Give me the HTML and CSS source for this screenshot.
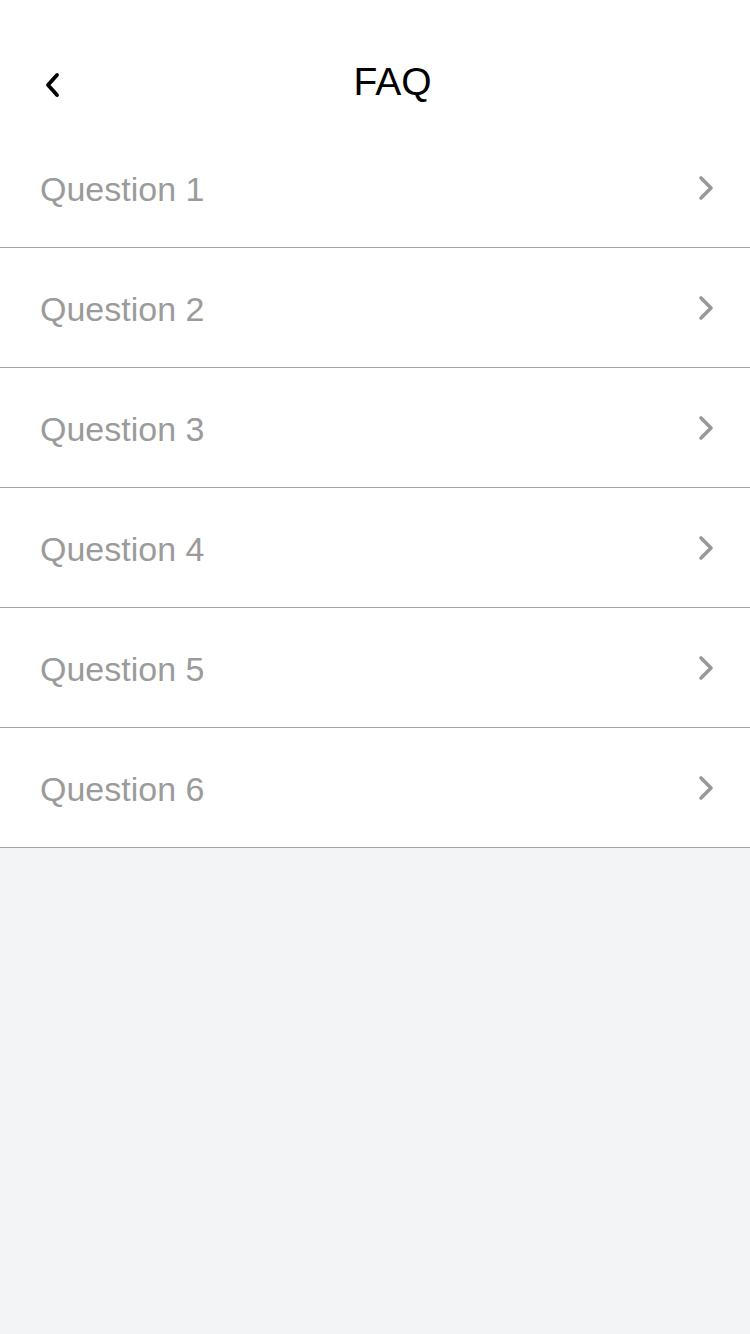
FILE: index.html
```html
<!DOCTYPE html>
<html lang="en">
<head>
<meta charset="utf-8">
<title>FAQ</title>
<link rel="stylesheet" href="styles.css">
</head>
<body>
<div class="page">
  <header class="header">
    <button class="back" aria-label="Back">
      <svg width="20" height="28" viewBox="0 0 20 28"><polyline points="14,4 5,14 14,24" fill="none" stroke="#000" stroke-width="3.8" stroke-linecap="round" stroke-linejoin="round"/></svg>
    </button>
    <h1 class="title">FAQ</h1>
    <span></span>
  </header>
  <ul class="list">
    <li class="row"><span class="q">Question 1</span><svg class="chev" width="18" height="26" viewBox="0 0 18 26"><polyline points="4,3 14,13 4,23" fill="none" stroke="#999" stroke-width="3.6" stroke-linecap="round" stroke-linejoin="round"/></svg></li>
    <li class="row"><span class="q">Question 2</span><svg class="chev" width="18" height="26" viewBox="0 0 18 26"><polyline points="4,3 14,13 4,23" fill="none" stroke="#999" stroke-width="3.6" stroke-linecap="round" stroke-linejoin="round"/></svg></li>
    <li class="row"><span class="q">Question 3</span><svg class="chev" width="18" height="26" viewBox="0 0 18 26"><polyline points="4,3 14,13 4,23" fill="none" stroke="#999" stroke-width="3.6" stroke-linecap="round" stroke-linejoin="round"/></svg></li>
    <li class="row"><span class="q">Question 4</span><svg class="chev" width="18" height="26" viewBox="0 0 18 26"><polyline points="4,3 14,13 4,23" fill="none" stroke="#999" stroke-width="3.6" stroke-linecap="round" stroke-linejoin="round"/></svg></li>
    <li class="row"><span class="q">Question 5</span><svg class="chev" width="18" height="26" viewBox="0 0 18 26"><polyline points="4,3 14,13 4,23" fill="none" stroke="#999" stroke-width="3.6" stroke-linecap="round" stroke-linejoin="round"/></svg></li>
    <li class="row"><span class="q">Question 6</span><svg class="chev" width="18" height="26" viewBox="0 0 18 26"><polyline points="4,3 14,13 4,23" fill="none" stroke="#999" stroke-width="3.6" stroke-linecap="round" stroke-linejoin="round"/></svg></li>
  </ul>
</div>
</body>
</html>
```
FILE: styles.css
```css
* { box-sizing: border-box; }
html, body { margin: 0; padding: 0; }
body {
  background: #f3f4f6;
  font-family: "Liberation Sans", Arial, sans-serif;
  min-height: 1334px;
}
.page { width: 750px; }
.header {
  background: #fff;
  height: 128px;
  display: grid;
  grid-template-columns: 1fr auto 1fr;
  align-items: start;
  padding: 0 0 0 35px;
}
.back {
  justify-self: start;
  margin: 71px 0 0 8px;
  padding: 0;
  border: 0;
  background: none;
  width: 20px;
  height: 28px;
  display: flex;
}
.title {
  margin: 62px 0 0 0;
  font-size: 39px;
  line-height: 1;
  font-weight: 400;
  color: #000;
}
.list {
  list-style: none;
  margin: 0;
  padding: 0;
  background: #fff;
}
.row {
  height: 120px;
  border-bottom: 1px solid #a3a3a3;
  display: flex;
  align-items: center;
  justify-content: space-between;
  padding: 0 35px 0 40px;
}
.q {
  font-size: 34px;
  color: #9b9b9b;
  padding-top: 4px;
}
.chev { display: block; }
```
